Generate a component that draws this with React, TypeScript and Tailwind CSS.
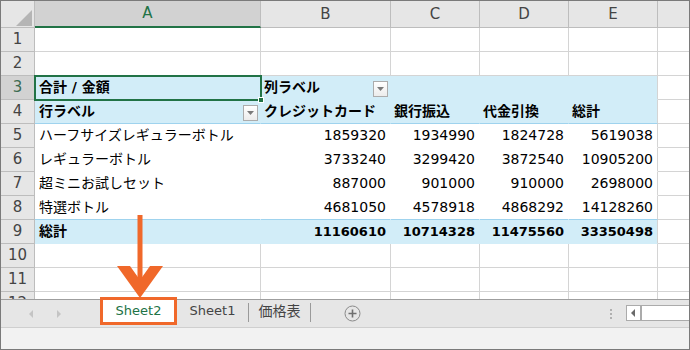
import React from 'react';

const font = "font-['DejaVu_Sans','Noto_Sans_CJK_JP',sans-serif]";
const colW = ['w-[226px]', 'w-[130px]', 'w-[89px]', 'w-[89px]', 'w-[89px]'];

const items = [
  { name: 'ハーフサイズレギュラーボトル', v: ['1859320', '1934990', '1824728', '5619038'] },
  { name: 'レギュラーボトル', v: ['3733240', '3299420', '3872540', '10905200'] },
  { name: '超ミニお試しセット', v: ['887000', '901000', '910000', '2698000'] },
  { name: '特選ボトル', v: ['4681050', '4578918', '4868292', '14128260'] },
];

const RowHead = ({ n, active }: { n: number; active?: boolean }) => (
  <div
    className={`w-[34px] shrink-0 h-full flex items-center justify-center border-r border-b border-[#bdbdbd] text-[15px] font-normal ${
      active ? 'bg-[#d2d2d2] text-[#3d6b52]' : 'bg-[#e6e6e6] text-[#444]'
    }`}
  >
    {n}
  </div>
);

const Dropdown = () => (
  <div className="w-[15px] h-[16px] shrink-0 self-end mb-[2px] mr-[2px] border border-[#acacac] bg-gradient-to-b from-white to-[#ececec] flex items-center justify-center">
    <svg width="7" height="4" viewBox="0 0 7 4">
      <path d="M0 0 L7 0 L3.5 4 Z" fill="#7a7a7a" />
    </svg>
  </div>
);

const BlankRow = ({ n }: { n: number }) => (
  <div className="flex h-[24px]">
    <RowHead n={n} />
    {colW.map((w, i) => (
      <div key={i} className={`${w} shrink-0 h-full border-r border-b border-[#d4d4d4] bg-white`} />
    ))}
    <div className="flex-1 h-full border-b border-[#d4d4d4] bg-white" />
  </div>
);

export default function App() {
  return (
    <div className={`w-[690px] h-[350px] border border-[#7a7a7a] flex flex-col relative overflow-hidden bg-white ${font}`}>
      {/* grid */}
      <div className="h-[298px] overflow-hidden">
        {/* column headers */}
        <div className="flex h-[27px]">
          <div className="w-[34px] shrink-0 h-full bg-[#e6e6e6] border-r border-b border-[#bdbdbd] flex items-end justify-end pr-[2px] pb-[1px]">
            <svg width="16" height="16" viewBox="0 0 16 16">
              <path d="M16 0 L16 16 L0 16 Z" fill="#b5b5b5" />
            </svg>
          </div>
          <div className={`${colW[0]} shrink-0 h-full bg-[#d2d2d2] border-r border-[#bdbdbd] border-b-2 border-b-[#217346] flex items-center justify-center text-[15px] text-[#217346]`}>
            A
          </div>
          {['B', 'C', 'D', 'E'].map((c, i) => (
            <div
              key={c}
              className={`${colW[i + 1]} shrink-0 h-full bg-[#e6e6e6] border-r border-b border-[#bdbdbd] flex items-center justify-center text-[15px] text-[#444]`}
            >
              {c}
            </div>
          ))}
          <div className="flex-1 h-full bg-[#e6e6e6] border-b border-[#bdbdbd]" />
        </div>

        <BlankRow n={1} />
        <BlankRow n={2} />

        {/* row 3 */}
        <div className="flex h-[24px] text-[14px] font-bold text-black">
          <RowHead n={3} active />
          <div className={`${colW[0]} shrink-0 h-full bg-[#d2edf8] border-r border-b border-[#d2edf8] flex items-center pl-[4px]`}>合計 / 金額</div>
          <div className={`${colW[1]} shrink-0 h-full bg-[#d2edf8] border-r border-b border-[#d2edf8] flex items-center justify-between pl-[3px]`}>
            <span>列ラベル</span>
            <Dropdown />
          </div>
          <div className={`${colW[2]} shrink-0 h-full bg-[#d2edf8] border-r border-b border-[#d2edf8]`} />
          <div className={`${colW[3]} shrink-0 h-full bg-[#d2edf8] border-r border-b border-[#d2edf8]`} />
          <div className={`${colW[4]} shrink-0 h-full bg-[#d2edf8] border-r border-r-[#d4d4d4] border-b border-b-[#d2edf8]`} />
          <div className="flex-1 h-full border-b border-[#d4d4d4]" />
        </div>

        {/* row 4 */}
        <div className="flex h-[24px] text-[14px] font-bold text-black">
          <RowHead n={4} />
          <div className={`${colW[0]} shrink-0 h-full bg-[#d2edf8] border-r border-r-[#d2edf8] border-b border-b-[#9fd3ee] flex items-center justify-between pl-[4px]`}>
            <span>行ラベル</span>
            <Dropdown />
          </div>
          {['クレジットカード', '銀行振込', '代金引換', '総計'].map((t, i) => (
            <div
              key={t}
              className={`${colW[i + 1]} shrink-0 h-full bg-[#d2edf8] border-r border-b border-b-[#9fd3ee] ${i === 3 ? 'border-r-[#d4d4d4]' : 'border-r-[#d2edf8]'} flex items-center pl-[3px]`}
            >
              {t}
            </div>
          ))}
          <div className="flex-1 h-full border-b border-[#d4d4d4]" />
        </div>

        {/* rows 5-8 */}
        {items.map((it, r) => (
          <div key={it.name} className="flex h-[24px] text-[14px] text-black">
            <RowHead n={5 + r} />
            <div className={`${colW[0]} shrink-0 h-full border-r border-r-white border-b ${r === 3 ? 'border-b-[#9fd3ee]' : 'border-b-white'} flex items-center pl-[4px]`}>
              {it.name}
            </div>
            {it.v.map((v, i) => (
              <div
                key={i}
                className={`${colW[i + 1]} shrink-0 h-full border-r border-b ${r === 3 ? 'border-b-[#9fd3ee]' : 'border-b-white'} ${i === 3 ? 'border-r-[#d4d4d4]' : 'border-r-white'} flex items-center justify-end pr-[4px]`}
              >
                {v}
              </div>
            ))}
            <div className="flex-1 h-full border-b border-[#d4d4d4]" />
          </div>
        ))}

        {/* row 9 */}
        <div className="flex h-[24px] text-[13px] font-bold text-black">
          <RowHead n={9} />
          <div className={`${colW[0]} shrink-0 h-full bg-[#d2edf8] border-r border-b border-[#d2edf8] flex items-center pl-[4px] text-[14px]`}>総計</div>
          {['11160610', '10714328', '11475560', '33350498'].map((v, i) => (
            <div
              key={v}
              className={`${colW[i + 1]} shrink-0 h-full bg-[#d2edf8] border-r border-b border-b-[#d2edf8] ${i === 3 ? 'border-r-[#d4d4d4]' : 'border-r-[#d2edf8]'} flex items-center justify-end pr-[4px]`}
            >
              {v}
            </div>
          ))}
          <div className="flex-1 h-full border-b border-[#d4d4d4]" />
        </div>

        <BlankRow n={10} />
        <BlankRow n={11} />
        <BlankRow n={12} />
      </div>

      {/* sheet tabs */}
      <div className="h-[29px] shrink-0 border-t border-b border-t-[#9e9e9e] border-b-[#cfcfcf] bg-[#e6e6e6] flex items-start text-[13px]">
        <div className="w-[99px] h-full flex items-center pl-[26px] gap-[20px]">
          <svg width="8" height="10" viewBox="0 0 8 10">
            <path d="M6 1 L2 5 L6 9 Z" fill="#c4c4c4" />
          </svg>
          <svg width="8" height="10" viewBox="0 0 8 10">
            <path d="M2 1 L6 5 L2 9 Z" fill="#c4c4c4" />
          </svg>
        </div>
        <div className="w-[77px] h-[22px] bg-white flex items-center justify-center text-[#217346]">Sheet2</div>
        <div className="w-[71px] h-[22px] flex items-center justify-center text-[#444]">Sheet1</div>
        <div className="w-px h-[19px] mt-[3px] bg-[#9a9a9a]" />
        <div className="w-[61px] h-[22px] flex items-center justify-center text-[#444] text-[14px]">価格表</div>
        <div className="w-px h-[19px] mt-[3px] bg-[#9a9a9a]" />
        <div className="ml-[33px] h-full flex items-center">
          <svg width="17" height="17" viewBox="0 0 17 17">
            <circle cx="8.5" cy="8.5" r="7.5" fill="none" stroke="#8a8a8a" strokeWidth="1" />
            <path d="M8.5 4.5 V12.5 M4.5 8.5 H12.5" stroke="#6f6f6f" strokeWidth="1.6" />
          </svg>
        </div>
        <div className="flex-1" />
        <div className="h-full flex flex-col justify-center gap-[2px] mr-[14px]">
          <div className="w-[2px] h-[2px] bg-[#b0b0b0]" />
          <div className="w-[2px] h-[2px] bg-[#b0b0b0]" />
          <div className="w-[2px] h-[2px] bg-[#b0b0b0]" />
        </div>
        <div className="w-[63px] h-[16px] mt-[5px] border border-r-0 border-[#ababab] bg-white flex">
          <div className="w-[15px] h-full border-r-2 border-[#ababab] flex items-center justify-center">
            <svg width="5" height="8" viewBox="0 0 5 8">
              <path d="M4 0 L0 4 L4 8 Z" fill="#6a6a6a" />
            </svg>
          </div>
        </div>
      </div>

      {/* status bar */}
      <div className="flex-1 bg-[#f2f2f2]" />

      {/* selection on A3 */}
      <div className="absolute left-[33px] top-[74px] w-[228px] h-[26px] border-2 border-[#217346] pointer-events-none" />
      <div className="absolute left-[257px] top-[96px] w-[6px] h-[6px] bg-[#217346] border border-white" />

      {/* annotation */}
      <svg className="absolute left-0 top-0 pointer-events-none" width="690" height="350" viewBox="0 0 690 350">
        <rect x="136.5" y="214" width="5" height="70" fill="#f0682a" />
        <path d="M116 265 L129 265 L139 279 L149 265 L162 265 L139 297 Z" fill="#f0682a" />
      </svg>
      <div className="absolute left-[99px] top-[296px] w-[77px] h-[28px] border-[3px] border-[#f0682a] pointer-events-none" />
    </div>
  );
}
